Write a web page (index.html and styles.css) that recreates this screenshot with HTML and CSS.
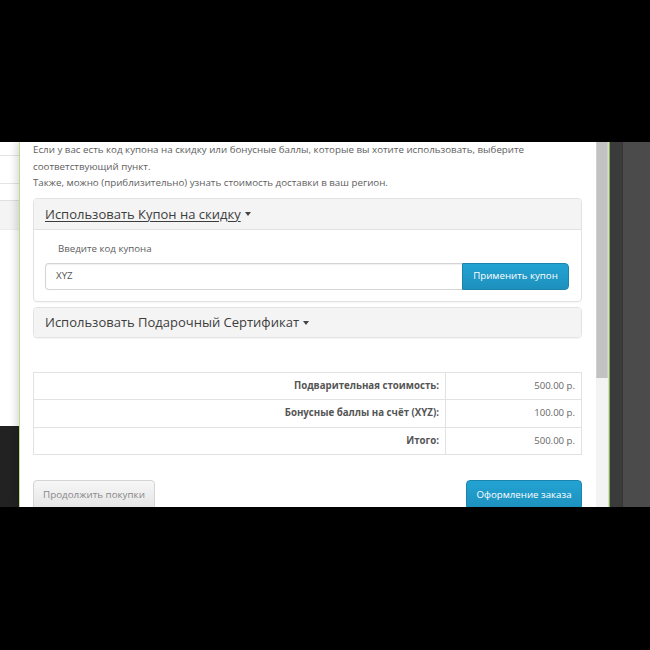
FILE: index.html
```html
<!DOCTYPE html>
<html>
<head>
<meta charset="utf-8">
<link rel="stylesheet" href="styles.css">
</head>
<body>
<div class="screen">
  <div class="page-left">
    <div class="pl-row pl-a"></div>
    <div class="pl-row pl-b"></div>
    <div class="pl-row pl-c"></div>
    <div class="pl-row pl-gray"></div>
    <div class="pl-row pl-white"></div>
    <div class="pl-row pl-dark"></div>
  </div>
  <div class="modal">
    <p class="intro">Если у вас есть код купона на скидку или бонусные баллы, которые вы хотите использовать, выберите соответствующий пункт.<br>Также, можно (приблизительно) узнать стоимость доставки в ваш регион.</p>
    <div class="panel">
      <div class="panel-heading"><span class="panel-title underline">Использовать Купон на скидку</span><span class="caret"></span></div>
      <div class="panel-body">
        <div class="label">Введите код купона</div>
        <div class="input-group">
          <div class="input">XYZ</div>
          <div class="btn-primary btn-apply">Применить купон</div>
        </div>
      </div>
    </div>
    <div class="panel">
      <div class="panel-heading"><span class="panel-title">Использовать Подарочный Сертификат</span><span class="caret"></span></div>
    </div>
    <div class="totals">
      <div class="tr"><div class="td td-label">Подварительная стоимость:</div><div class="td td-value">500.00 р.</div></div>
      <div class="tr"><div class="td td-label">Бонусные баллы на счёт (XYZ):</div><div class="td td-value">100.00 р.</div></div>
      <div class="tr"><div class="td td-label">Итого:</div><div class="td td-value">500.00 р.</div></div>
    </div>
    <div class="buttons">
      <div class="btn-default">Продолжить покупки</div>
      <div class="btn-primary btn-checkout">Оформление заказа</div>
    </div>
  </div>
  <div class="scrollbar"><div class="thumb"></div></div>
  <div class="edge-light"></div>
  <div class="edge-green"></div>
  <div class="strip-dark"></div>
  <div class="strip-mid"></div>
</div>
</body>
</html>
```
FILE: styles.css
```css
html, body {
  margin: 0;
  padding: 0;
  background: #000;
}
body {
  width: 650px;
  height: 650px;
  padding-top: 142px;
  box-sizing: border-box;
  font-family: "Open Sans", "DejaVu Sans", sans-serif;
}
.screen {
  display: flex;
  width: 650px;
  height: 365px;
  overflow: hidden;
  background: #fff;
}
.page-left {
  width: 19px;
  flex: none;
  display: flex;
  flex-direction: column;
  background: #fff;
}
.pl-row { flex: none; }
.pl-a { height: 13px; border-bottom: 1px solid #e4e4e4; }
.pl-b { height: 27px; border-bottom: 1px solid #e4e4e4; }
.pl-c { height: 16px; border-bottom: 1px solid #e0e0e0; }
.pl-gray { height: 28px; background: #f4f4f4; border-bottom: 1px solid #ececec; }
.pl-white { height: 196px; background: #fff; }
.pl-dark { flex: 1; background: #222; }

.modal {
  flex: none;
  width: 577px;
  border-left: 1px solid #b9dc8e;
  box-shadow: -4px 0 6px rgba(0,0,0,0.12);
  padding: 0 14px 0 13px;
  box-sizing: border-box;
  background: #fff;
  color: #606060;
  font-size: 9.75px;
  line-height: 16.7px;
}
.intro {
  margin: 0 0 6px;
}
.panel {
  border: 1px solid #e2e2e2;
  border-radius: 4px;
  margin-bottom: 5px;
  box-shadow: 0 1px 1px rgba(0,0,0,0.04);
}
.panel-heading {
  height: 29.5px;
  background: #f4f4f4;
  display: flex;
  align-items: center;
  padding-left: 11px;
  border-radius: 3px 3px 0 0;
  color: #3d3d3d;
  font-size: 13px;
}
.panel + .panel .panel-heading { border-radius: 3px; height: 29px; }
.panel:first-of-type .panel-heading { border-bottom: 1px solid #e2e2e2; }
.underline { text-decoration: underline; text-underline-offset: 2px; text-decoration-thickness: 1px; }
.caret {
  display: inline-block;
  width: 0;
  height: 0;
  margin-left: 4px;
  border-left: 3.5px solid transparent;
  border-right: 3.5px solid transparent;
  border-top: 4px solid #444;
  margin-top: 1px;
}
.panel-body {
  padding: 11px 12px 11px 11px;
}
.label {
  padding-left: 13px;
  font-size: 9.7px;
  line-height: 16px;
  margin-bottom: 6px;
  color: #606060;
}
.input-group {
  display: flex;
  height: 27px;
}
.input {
  flex: 1;
  border: 1px solid #d4d4d4;
  border-right: none;
  border-radius: 4px 0 0 4px;
  padding-left: 10px;
  display: flex;
  align-items: center;
  color: #555;
  font-size: 9.75px;
  box-shadow: inset 0 1px 1px rgba(0,0,0,0.06);
}
.btn-primary {
  background: linear-gradient(#23a3d3, #1d90bd);
  border: 1px solid #1b84ad;
  color: #fff;
  font-size: 9.7px;
  display: flex;
  align-items: center;
  justify-content: center;
  box-sizing: border-box;
}
.btn-apply {
  width: 107px;
  border-radius: 0 4px 4px 0;
}
.totals {
  margin-top: 34px;
  border: 1px solid #e2e2e2;
  border-bottom: none;
}
.tr {
  display: flex;
  height: 26.5px;
  border-bottom: 1px solid #e2e2e2;
}
.td {
  display: flex;
  align-items: center;
  justify-content: flex-end;
  padding-right: 6px;
  box-sizing: border-box;
}
.td-label {
  width: 412px;
  border-right: 1px solid #e2e2e2;
  font-weight: bold;
  color: #555;
  font-size: 9.7px;
}
.td-value {
  flex: 1;
  color: #666;
  font-size: 9.6px;
}
.buttons {
  margin-top: 25px;
  display: flex;
  justify-content: space-between;
}
.btn-default {
  width: 122px;
  height: 30px;
  box-sizing: border-box;
  background: linear-gradient(#f7f7f7, #e4e4e4);
  border: 1px solid #d4d4d4;
  border-radius: 4px;
  color: #888;
  font-size: 9.8px;
  display: flex;
  align-items: center;
  justify-content: center;
}
.btn-checkout {
  width: 116px;
  height: 30px;
  border-radius: 4px;
}
.scrollbar {
  width: 12px;
  flex: none;
  background: #f3f3f3;
}
.thumb {
  height: 236px;
  background: #c2c2c2;
  border-right: 1px solid #cfcfcf;
  border-left: 1px solid #cfcfcf;
  box-sizing: border-box;
}
.edge-light { width: 1px; flex: none; background: #d8d8d8; }
.edge-green { width: 1px; flex: none; background: #7fb53c; }
.strip-dark { width: 12px; flex: none; background: #3b3b3b; border-right: 1px solid #353535; }
.strip-mid { flex: 1; background: #4b4b4b; }
```
